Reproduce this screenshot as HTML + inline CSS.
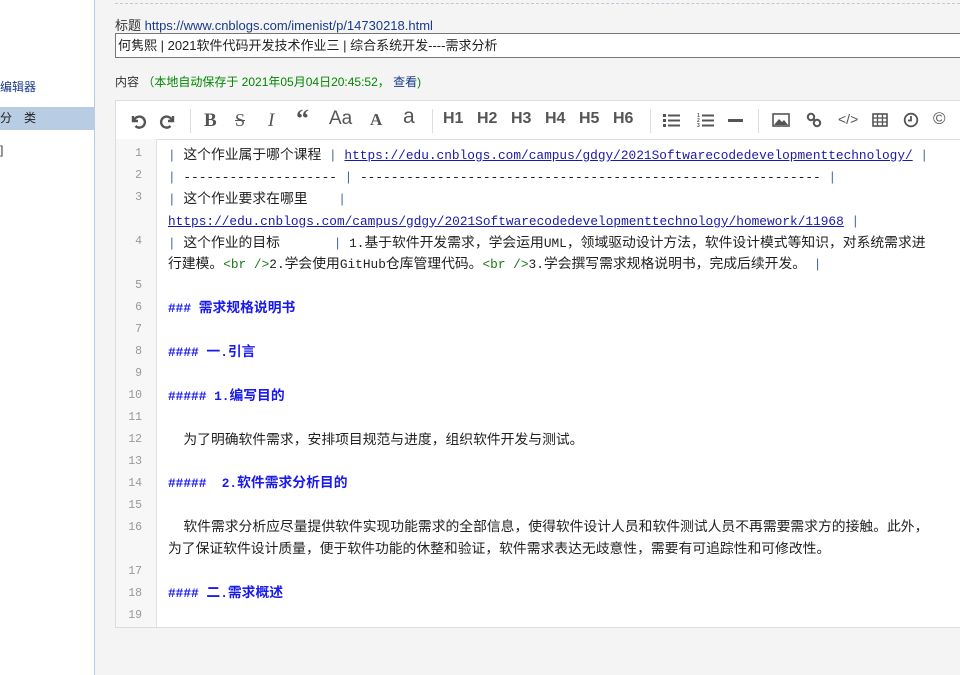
<!DOCTYPE html><html><head><meta charset="utf-8"><style>
body{margin:0;width:960px;height:675px;overflow:hidden;background:#f4f4f4;font-family:"Liberation Sans","Noto Sans CJK SC",sans-serif;position:relative}
.side{position:absolute;left:0;top:0;width:94px;height:675px;background:#fff;border-right:1px solid #b8cce4}
.side .a{position:absolute;left:0;top:78px;font-size:12px;color:#1a3a8a}
.side .b{position:absolute;left:0;top:107px;width:94px;height:23px;background:#b8cce4;font-size:12px;line-height:23px;color:#222}
.side .c{position:absolute;left:0;top:143px;font-size:12px;color:#333}
.dash{position:absolute;left:115px;right:0;top:3px;border-top:1px dashed #c0c8d8}
.t{position:absolute;left:115px;top:15px;font-size:13px;color:#333}
.t a{color:#1a3a8a;text-decoration:none}
.inp{position:absolute;left:115px;top:33px;width:850px;height:25px;border:1px solid #777;background:#fff;font-size:13px;line-height:23px;padding-left:2px;color:#222;box-sizing:border-box}
.nr{position:absolute;left:115px;top:73px;font-size:12px;color:#333}
.nr .g{color:#080}.nr a{color:#1a3a8a}
.ed{position:absolute;left:115px;top:100px;width:850px;height:528px;background:#fff;border:1px solid #ddd;box-sizing:border-box}
.tb{position:absolute;left:0;top:0;right:0;height:38px;border-bottom:1px solid #ddd;font-weight:bold;color:#555;font-size:16px}
.tb span{position:absolute;top:9px}
.tb svg{position:absolute;top:11px}
.sep{position:absolute;top:8px;width:1px;height:24px;background:#ddd}
.gut{position:absolute;left:0;top:38px;width:40px;bottom:0;background:#f7f7f7;border-right:1px solid #e2e2e2}
.ln{position:absolute;left:0;width:26px;text-align:right;font:11.5px "Liberation Mono",monospace;color:#999}
.code{position:absolute;left:52px;top:44px;font:12.8px/21.9px "Liberation Mono","Noto Sans CJK SC",monospace;color:#222}
.code div{height:21.9px;white-space:pre;overflow:visible}
.k{font-size:13.8px;font-family:"Noto Sans CJK SC",sans-serif;line-height:10px}
.u{color:#1a1aaa;text-decoration:underline}.p{color:#4466aa}.h{color:#1a1aee;font-weight:bold}.gr{color:#1a7a1a}
</style></head><body>
<div class="side"><div class="a">编辑器</div><div class="b">分　类</div><div class="c">]</div></div>
<div class="dash"></div>
<div class="t">标题 <a>https://www.cnblogs.com/imenist/p/14730218.html</a></div>
<div class="inp">何隽熙 | 2021软件代码开发技术作业三 | 综合系统开发----需求分析</div>
<div class="nr">内容 <span class="g">（本地自动保存于 2021年05月04日20:45:52， <a>查看</a>)</span></div>
<div class="ed">
<div class="tb">
<svg style="left:13px" width="18" height="18" viewBox="0 0 18 18"><path d="M4 4v5h5" fill="none" stroke="#555" stroke-width="2.4"/><path d="M5 9a5.5 5.5 0 1 1 1.5 5" fill="none" stroke="#555" stroke-width="2.4"/></svg>
<svg style="left:43px" width="18" height="18" viewBox="0 0 18 18"><path d="M14 4v5h-5" fill="none" stroke="#555" stroke-width="2.4"/><path d="M13 9a5.5 5.5 0 1 0 -1.5 5" fill="none" stroke="#555" stroke-width="2.4"/></svg>
<div class="sep" style="left:74px"></div>
<span style="left:88px;font-family:'Liberation Serif';font-size:19px">B</span>
<span style="left:119px;font-family:'Liberation Serif';font-size:18px;font-weight:normal;text-decoration:line-through">S</span>
<span style="left:152px;font-family:'Liberation Serif';font-style:italic;font-size:19px;font-weight:normal">I</span>
<span style="left:180px;font-size:26px;top:3px;font-family:'Liberation Serif'">&#8220;</span>
<span style="left:213px;font-size:19px;font-weight:normal;top:7px">Aa</span>
<span style="left:254px;font-family:'Liberation Serif';font-size:17px">A</span>
<span style="left:287px;font-size:21px;font-weight:normal;top:4px">a</span>
<div class="sep" style="left:316px"></div>
<span style="left:327px">H1</span><span style="left:361px">H2</span><span style="left:395px">H3</span><span style="left:429px">H4</span><span style="left:463px">H5</span><span style="left:497px">H6</span>
<div class="sep" style="left:534px"></div>
<svg style="left:547px" width="18" height="16" viewBox="0 0 18 16"><g fill="#555"><rect x="0" y="2" width="3" height="3"/><rect x="0" y="7" width="3" height="3"/><rect x="0" y="12" width="3" height="3"/><rect x="5" y="2.5" width="12" height="2"/><rect x="5" y="7.5" width="12" height="2"/><rect x="5" y="12.5" width="12" height="2"/></g></svg>
<svg style="left:581px" width="18" height="16" viewBox="0 0 18 16"><g fill="#555"><text x="0" y="5" font-size="5">1</text><text x="0" y="10" font-size="5">2</text><text x="0" y="15" font-size="5">3</text><rect x="5" y="2.5" width="12" height="2"/><rect x="5" y="7.5" width="12" height="2"/><rect x="5" y="12.5" width="12" height="2"/></g></svg>
<svg style="left:612px" width="16" height="16" viewBox="0 0 16 16"><rect x="0" y="7" width="15" height="3" fill="#555"/></svg>
<div class="sep" style="left:642px"></div>
<svg style="left:656px" width="18" height="16" viewBox="0 0 18 16"><rect x="1" y="2" width="16" height="12" fill="none" stroke="#555" stroke-width="1.6"/><path d="M2 13l5-6 3 3 2-2 4 5z" fill="#555"/></svg>
<svg style="left:690px" width="16" height="16" viewBox="0 0 16 16"><circle cx="5" cy="5" r="3.2" fill="none" stroke="#555" stroke-width="2"/><circle cx="11" cy="11" r="3.2" fill="none" stroke="#555" stroke-width="2"/><path d="M7 7l2 2" stroke="#555" stroke-width="2"/></svg>
<span style="left:722px;font-weight:normal;font-size:14px;top:10px">&lt;/&gt;</span>
<svg style="left:756px" width="16" height="16" viewBox="0 0 16 16"><rect x="1" y="2" width="14" height="12" fill="none" stroke="#555" stroke-width="1.6"/><path d="M1 6h14M1 10h14M5.5 2v12M10.5 2v12" stroke="#555" stroke-width="1.3"/></svg>
<svg style="left:787px" width="16" height="16" viewBox="0 0 16 16"><circle cx="8" cy="8" r="6.3" fill="none" stroke="#555" stroke-width="1.8"/><path d="M8 4v4.5H5" fill="none" stroke="#555" stroke-width="1.8"/></svg>
<span style="left:817px;font-size:17px;top:8px;font-weight:normal">©</span>
</div>
<div class="gut"></div>
<div class="ln" style="top:46px">1</div><div class="ln" style="top:68px">2</div><div class="ln" style="top:90px">3</div><div class="ln" style="top:134px">4</div><div class="ln" style="top:178px">5</div><div class="ln" style="top:200px">6</div><div class="ln" style="top:222px">7</div><div class="ln" style="top:244px">8</div><div class="ln" style="top:266px">9</div><div class="ln" style="top:288px">10</div><div class="ln" style="top:310px">11</div><div class="ln" style="top:332px">12</div><div class="ln" style="top:354px">13</div><div class="ln" style="top:376px">14</div><div class="ln" style="top:398px">15</div><div class="ln" style="top:420px">16</div><div class="ln" style="top:464px">17</div><div class="ln" style="top:486px">18</div><div class="ln" style="top:508px">19</div>
<div class="code">
<div><span class="p">|</span> <span class="k">这个作业属于哪个课程</span> <span class="p">|</span> <span class="u">https://edu.cnblogs.com/campus/gdgy/2021Softwarecodedevelopmenttechnology/</span> <span class="p">|</span></div>
<div><span class="p">|</span> -------------------- <span class="p">|</span> ------------------------------------------------------------ <span class="p">|</span></div>
<div><span class="p">|</span> <span class="k">这个作业要求在哪里</span>    <span class="p">|</span></div>
<div><span class="u">https://edu.cnblogs.com/campus/gdgy/2021Softwarecodedevelopmenttechnology/homework/11968</span> <span class="p">|</span></div>
<div><span class="p">|</span> <span class="k">这个作业的目标</span>       <span class="p">|</span> 1.<span class="k">基于软件开发需求，学会运用</span>UML<span class="k">，领域驱动设计方法，软件设计模式等知识，对系统需求进</span></div>
<div><span class="k">行建模。</span><span class="gr">&lt;br /&gt;</span>2.<span class="k">学会使用</span>GitHub<span class="k">仓库管理代码。</span><span class="gr">&lt;br /&gt;</span>3.<span class="k">学会撰写需求规格说明书，完成后续开发。</span> <span class="p">|</span></div>
<div></div>
<div><span class="h">### <span class="k">需求规格说明书</span></span></div>
<div></div>
<div><span class="h">#### <span class="k">一</span>.<span class="k">引言</span></span></div>
<div></div>
<div><span class="h">##### 1.<span class="k">编写目的</span></span></div>
<div></div>
<div>  <span class="k">为了明确软件需求，安排项目规范与进度，组织软件开发与测试。</span></div>
<div></div>
<div><span class="h">#####  2.<span class="k">软件需求分析目的</span></span></div>
<div></div>
<div>  <span class="k">软件需求分析应尽量提供软件实现功能需求的全部信息，使得软件设计人员和软件测试人员不再需要需求方的接触。此外，</span></div>
<div><span class="k">为了保证软件设计质量，便于软件功能的休整和验证，软件需求表达无歧意性，需要有可追踪性和可修改性。</span></div>
<div></div>
<div><span class="h">#### <span class="k">二</span>.<span class="k">需求概述</span></span></div>
</div>
</div>
</body></html>
